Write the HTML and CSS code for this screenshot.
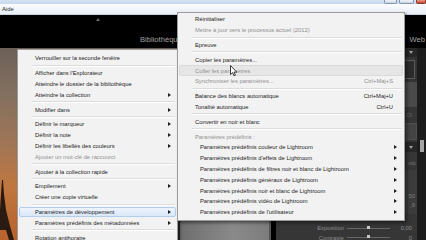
FILE: index.html
```html
<!DOCTYPE html>
<html lang="fr">
<head>
  <meta charset="UTF-8"/>
  <title>Lightroom - menu contextuel</title>
  <link rel="stylesheet" href="styles.css">
</head>
<body>
  <div class="screen">
    <div class="titlebar">
      <div class="winbtns">
        <span class="wb"></span><span class="wb wide"></span><span class="wb close"></span>
      </div>
    </div>
    <div class="menubar"><span>Aide</span></div>

    <div class="lr">
      <div class="lr-top">
        <span class="panel-toggle"></span>
        <div class="modules">
          <span>Bibliothèque</span>
          <span>Web</span>
        </div>
      </div>
      <div class="lr-body">
        <div class="photo">
          <svg class="tower" viewBox="0 0 20 60" width="20" height="60">
            <path d="M6 0 L7 0 L8 14 L10 30 L14 46 L18 60 L13 60 L10 50 L4 50 L1 60 L-4 60 L1 46 L4 30 L5 14 Z" fill="#2a1a12"/>
          </svg>
        </div>
        <div class="filmstrip"></div>
        <div class="right-panel">
          <div class="rp-head"><span class="tri-down"></span></div>
          <div class="rp-hist"><span class="frame"></span></div>
          <div class="rp-grey"></div>
          <div class="rp-info">Ol</div>
          <div class="rp-box"></div>
          <div class="rp-head second"><span class="tri-down"></span></div>
          <div class="rp-line">nic</div>
          <div class="rp-vals"><span>50</span><span>,9</span></div>
          <div class="rp-row tone"><span class="lbl">Tonalité</span><span class="val">Auto</span></div>
          <div class="rp-row"><span class="lbl">Exposition</span><span class="slider"><i></i></span><span class="val">0,00</span></div>
          <div class="rp-row"><span class="lbl">Contraste</span><span class="slider"><i></i></span><span class="val">0</span></div>
        </div>
        <div class="scrollbar"><span class="thumb"></span></div>
      </div>
    </div>

    <div class="menu main-menu">
      <div class="item">Verrouiller sur la seconde fenêtre</div>
      <div class="sep"></div>
      <div class="item">Afficher dans l'Explorateur</div>
      <div class="item">Atteindre le dossier de la bibliothèque</div>
      <div class="item sub">Atteindre la collection</div>
      <div class="sep"></div>
      <div class="item sub">Modifier dans</div>
      <div class="sep"></div>
      <div class="item sub">Définir le marqueur</div>
      <div class="item sub">Définir la note</div>
      <div class="item sub">Définir les libellés des couleurs</div>
      <div class="item off">Ajouter un mot-clé de raccourci</div>
      <div class="sep"></div>
      <div class="item">Ajouter à la collection rapide</div>
      <div class="sep"></div>
      <div class="item sub">Empilement</div>
      <div class="item">Créer une copie virtuelle</div>
      <div class="sep"></div>
      <div class="item sub active">Paramètres de développement</div>
      <div class="item sub">Paramètres prédéfinis des métadonnées</div>
      <div class="sep"></div>
      <div class="item">Rotation antihoraire</div>
    </div>

    <div class="menu sub-menu">
      <div class="item">Réinitialiser</div>
      <div class="item off">Mettre à jour vers le processus actuel (2012)</div>
      <div class="sep"></div>
      <div class="item">Epreuve</div>
      <div class="sep"></div>
      <div class="item">Copier les paramètres...</div>
      <div class="item off hover">Coller les paramètres</div>
      <div class="item off">Synchroniser les paramètres...<span class="key">Ctrl+Maj+S</span></div>
      <div class="sep"></div>
      <div class="item">Balance des blancs automatique<span class="key">Ctrl+Maj+U</span></div>
      <div class="item">Tonalité automatique<span class="key">Ctrl+U</span></div>
      <div class="sep"></div>
      <div class="item">Convertir en noir et blanc</div>
      <div class="sep"></div>
      <div class="item off">Paramètres prédéfinis :</div>
      <div class="item sub preset">Paramètres prédéfinis couleur de Lightroom</div>
      <div class="item sub preset">Paramètres prédéfinis d'effets de Lightroom</div>
      <div class="item sub preset">Paramètres prédéfinis de filtres noir et blanc de Lightroom</div>
      <div class="item sub preset">Paramètres prédéfinis généraux de Lightroom</div>
      <div class="item sub preset">Paramètres prédéfinis noir et blanc de Lightroom</div>
      <div class="item sub preset">Paramètres prédéfinis vidéo de Lightroom</div>
      <div class="item sub preset">Paramètres prédéfinis de l'utilisateur</div>
    </div>

    <svg class="cursor" viewBox="0 0 8 12" width="8" height="12">
      <path d="M0.5 0.5 L0.5 9.5 L2.6 7.6 L4 10.8 L5.4 10.2 L4 7.1 L6.8 7.1 Z" fill="#fff" stroke="#111" stroke-width="0.8" stroke-linejoin="round"/>
    </svg>
  </div>
</body>
</html>
```

FILE: styles.css
```css
* { box-sizing: border-box; margin: 0; padding: 0; }

body {
  background: #000;
  font-family: "Liberation Sans", Arial, sans-serif;
}

.screen {
  position: relative;
  width: 426px;
  height: 240px;
  overflow: hidden;
  display: flex;
  flex-direction: column;
  background: #000;
}

/* window chrome */
.titlebar {
  height: 4px;
  background: linear-gradient(#d6e3f2, #c6d8ec);
  display: flex;
  justify-content: flex-end;
}

.winbtns { display: flex; gap: 2px; }

.wb {
  width: 13px;
  height: 4px;
  background: linear-gradient(#eef3f9, #c9d6e6);
  border: 1px solid #8595ab;
  border-top: none;
  border-radius: 0 0 2px 2px;
}
.wb.wide { width: 15px; }
.wb.close { width: 10px; background: linear-gradient(#e8a193, #c6432c); border-color: #8c3a2c; }

.menubar {
  height: 10.5px;
  background: linear-gradient(#fbfcfe, #e8eef6);
  border-bottom: 1px solid #c9d3df;
  font-size: 5.8px;
  color: #222;
  display: flex;
  align-items: center;
  padding-left: 2px;
}

/* lightroom window */
.lr { flex: 1; display: flex; flex-direction: column; min-height: 0; }

.lr-top {
  height: 33.5px;
  flex-shrink: 0;
  background: #000;
  position: relative;
}

.panel-toggle {
  position: absolute;
  left: 96px;
  top: 3px;
  border-left: 2.5px solid transparent;
  border-right: 2.5px solid transparent;
  border-bottom: 3px solid #6b6b6b;
}

.modules {
  display: flex;
  justify-content: space-between;
  padding: 20px 1px 0 140px;
  font-size: 7.6px;
  color: #a3a3a3;
}

.lr-body { flex: 1; display: flex; min-height: 0; }

.photo {
  width: 178px;
  background: linear-gradient(#6c6058 0%, #84705f 25%, #a07656 50%, #c0773f 72%, #b9622c 100%);
  position: relative;
}

.tower {
  position: absolute;
  left: -4px;
  bottom: 0;
}

.filmstrip {
  width: 93px;
  border-left: 2px solid #2b2b2b;
  border-right: 2px solid #555;
  background: linear-gradient(90deg, #6e6e6e, #8a8a8a 60%, #7c7c7c);
  margin-right: 5px;
}

/* right develop panel */
.right-panel {
  flex: 1;
  background: #363636;
  display: flex;
  flex-direction: column;
  overflow: hidden;
  font-size: 5.8px;
  color: #8c8c8c;
}
.right-panel > * { flex-shrink: 0; }

.rp-head {
  height: 9px;
  background: #262626;
  display: flex;
  justify-content: flex-end;
  align-items: center;
  padding-right: 4px;
}
.rp-head.second { height: 10px; margin-top: 2px; }

.tri-down {
  border-left: 2px solid transparent;
  border-right: 2px solid transparent;
  border-top: 3px solid #a0a0a0;
}

.rp-hist {
  height: 25px;
  background: #333;
  display: flex;
  justify-content: flex-end;
  padding: 3px 2px 3px 0;
}
.rp-hist .frame { width: 12px; border: 1px solid #5a5a5a; background: #2c2c2c; }

.rp-grey { height: 25px; background: #4a4a4a; }

.rp-info {
  height: 16px;
  display: flex;
  align-items: center;
  justify-content: flex-end;
  padding-right: 5px;
  color: #666;
}

.rp-box {
  height: 17px;
  margin-left: 110px;
  background: #444;
  border: 1px solid #4f4f4f;
}

.rp-line {
  height: 18px;
  display: flex;
  align-items: flex-end;
  justify-content: flex-end;
  padding: 0 1px 4px 0;
  color: #7c7c7c;
}

.rp-vals {
  height: 44px;
  background: #3c3c3c;
  display: flex;
  flex-direction: column;
  align-items: flex-end;
  justify-content: center;
  gap: 3px;
  padding: 16px 2px 0 0;
  color: #7c7c7c;
}

.rp-row {
  display: flex;
  align-items: center;
  height: 9.5px;
  padding-right: 5px;
}
.rp-row .lbl { width: 68px; text-align: right; margin-right: 3px; }
.rp-row.tone .lbl { width: 92px; }
.rp-row.tone .val { padding-right: 12px; }
.rp-row .slider {
  width: 43px;
  height: 1px;
  background: #666;
  position: relative;
}
.rp-row .slider i {
  position: absolute;
  left: 20px;
  top: -2px;
  width: 3px;
  height: 3px;
  background: #c8c8c8;
}
.rp-row .val { margin-left: auto; }

.scrollbar {
  width: 9px;
  background: #1c1c1c;
  display: flex;
  flex-direction: column;
  padding: 0 2px 0 3px;
}
.scrollbar .thumb { height: 12px; background: #a5a5a5; margin-top: 92px; }

/* context menus */
.menu {
  position: absolute;
  background: #f2f2f2;
  border: 1px solid #9c9c9c;
  box-shadow: 2px 2px 3px rgba(0, 0, 0, 0.45);
  font-size: 5.8px;
  color: #1c1c1c;
  display: flex;
  flex-direction: column;
}

.main-menu { left: 17px; top: 49px; width: 161px; height: 200px; padding: 3px 0 0; }
.sub-menu { left: 177px; top: 12px; width: 228px; padding: 1px 0 2px; }

.item {
  height: 10.8px;
  flex-shrink: 0;
  display: flex;
  align-items: center;
  padding: 0 4px 0 15px;
  margin: 0 1px;
  border: 1px solid transparent;
  border-radius: 2px;
  white-space: nowrap;
}

.sub-menu .item { padding-right: 5px; }
.item.preset { padding-left: 20px; }
.item.off { color: #909090; }

.item.sub::after {
  content: '';
  margin-left: auto;
  border-left: 3px solid #222;
  border-top: 2px solid transparent;
  border-bottom: 2px solid transparent;
}

.key { margin-left: auto; padding-right: 4px; }

.item.active {
  background: linear-gradient(#eef4fc, #dae7f7);
  border-color: #b3cdee;
}

.item.hover {
  background: #e6e6e6;
  border-color: #dadada;
}

.sep {
  height: 4px;
  flex-shrink: 0;
  display: flex;
  align-items: center;
  padding: 0 2px 0 14px;
}
.sep::before {
  content: '';
  flex: 1;
  height: 1px;
  background: #dcdcdc;
  border-bottom: 1px solid #fff;
  box-sizing: content-box;
}

.cursor {
  position: absolute;
  left: 230px;
  top: 65px;
}
```
